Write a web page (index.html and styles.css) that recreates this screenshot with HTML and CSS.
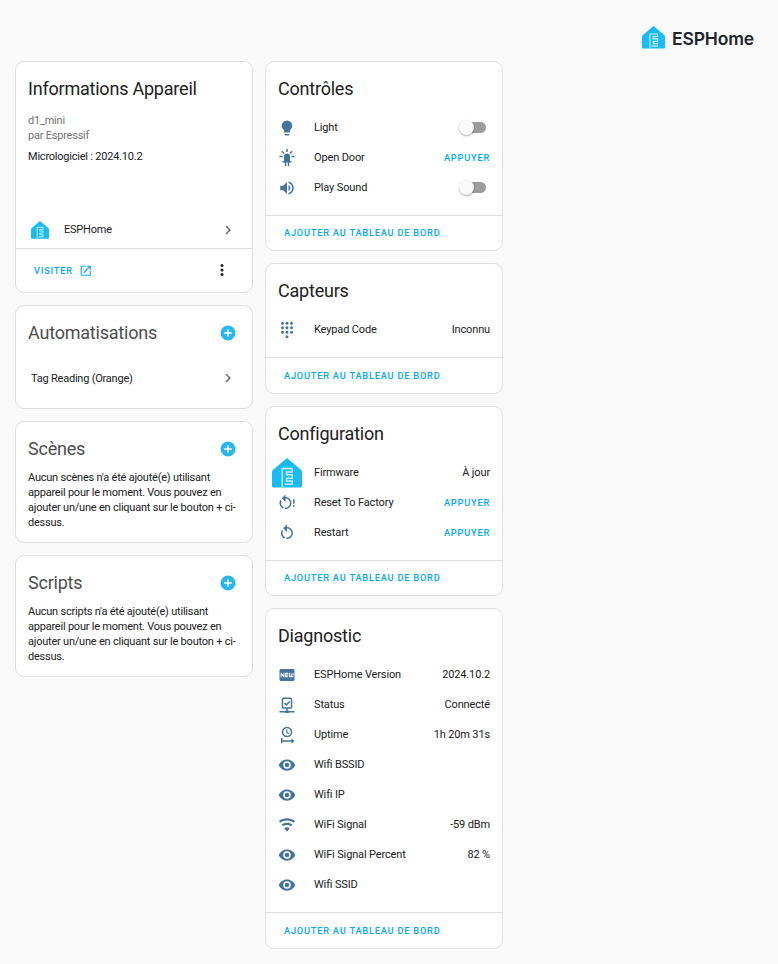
FILE: index.html
```html
<!DOCTYPE html>
<html lang="fr">
<head>
<meta charset="utf-8">
<title>Appareil</title>
<link rel="stylesheet" href="styles.css">
</head>
<body>
<svg class="defs" width="0" height="0">
  <symbol id="home" viewBox="0 0 30 30">
    <path fill="#18bcf2" d="M15 0 29.200 12.100Q30 12.800 30 13.900V27.900Q30 29.400 28.500 29.400H1.500Q0 29.400 0 27.900V13.900Q0 12.800.8 12.100Z"/>
    <path fill="none" stroke="#c8effc" stroke-width="1.500" d="M10.300 29V10.400H20.200V13.900H14.600V16.700H20.200V20.200H14.600V23H20.200V26.300H12.800"/>
  </symbol>
  <symbol id="bulb" viewBox="0 0 24 24"><path d="M12,2A7,7 0 0,0 5,9C5,11.38 6.19,13.47 8,14.74V17A1,1 0 0,0 9,18H15A1,1 0 0,0 16,17V14.74C17.81,13.47 19,11.38 19,9A7,7 0 0,0 12,2M9,21A1,1 0 0,0 10,22H14A1,1 0 0,0 15,21V20H9V21Z"/></symbol>
  <symbol id="led" viewBox="0 0 24 24"><path d="M11,0V4H13V0H11M18.3,2.29L15.24,5.29L16.64,6.71L19.7,3.71L18.3,2.29M5.71,2.29L4.29,3.71L7.29,6.71L8.71,5.29L5.71,2.29M12,6A4,4 0 0,0 8,10V16H6V18H9V23H11V18H13V23H15V18H18V16H16V10A4,4 0 0,0 12,6M2,9V11H6V9H2M18,9V11H22V9H18Z"/></symbol>
  <symbol id="volume" viewBox="0 0 24 24"><path d="M14,3.23V5.29C16.89,6.15 19,8.83 19,12C19,15.17 16.89,17.84 14,18.7V20.77C18,19.86 21,16.28 21,12C21,7.72 18,4.14 14,3.23M16.5,12C16.5,10.23 15.5,8.71 14,7.97V16C15.5,15.29 16.5,13.76 16.5,12M3,9V15H7L12,20V4L7,9H3Z"/></symbol>
  <symbol id="dialpad" viewBox="0 0 24 24"><path fill="none" stroke="currentColor" stroke-width="4" stroke-linecap="round" d="M6 3h0M12 3h0M18 3h0M6 9h0M12 9h0M18 9h0M6 15h0M12 15h0M18 15h0M12 21h0"/></symbol>
  <symbol id="restart" viewBox="0 0 24 24"><path d="M12,4C14.1,4 16.1,4.8 17.6,6.3C20.7,9.4 20.7,14.5 17.6,17.6C15.8,19.5 13.3,20.2 10.9,19.9L11.4,17.9C13.1,18.1 14.9,17.5 16.2,16.2C18.5,13.9 18.5,10.1 16.2,7.7C15.1,6.6 13.5,6 12,6V10.6L7,5.6L12,0.6V4M6.3,17.6C3.7,15 3.3,11 5.1,7.9L6.6,9.4C5.5,11.6 5.9,14.4 7.8,16.2C8.3,16.7 8.9,17.1 9.6,17.4L9,19.4C8,19 7.1,18.4 6.3,17.6Z"/></symbol>
  <symbol id="restart-alert" viewBox="0 0 24 24"><path transform="translate(-2)" d="M12,4C14.1,4 16.1,4.8 17.6,6.3C20.7,9.4 20.7,14.5 17.6,17.6C15.8,19.5 13.3,20.2 10.9,19.9L11.4,17.9C13.1,18.1 14.9,17.5 16.2,16.2C18.5,13.9 18.5,10.1 16.2,7.7C15.1,6.6 13.5,6 12,6V10.6L7,5.6L12,0.6V4M6.3,17.6C3.7,15 3.3,11 5.1,7.9L6.6,9.4C5.5,11.6 5.9,14.4 7.8,16.2C8.3,16.7 8.9,17.1 9.6,17.4L9,19.4C8,19 7.1,18.4 6.3,17.6Z"/><path d="M20 7h2v6h-2zM20 15h2v2h-2z"/></symbol>
  <symbol id="new" viewBox="0 0 24 24"><path d="M20,4C21.11,4 22,4.89 22,6V18C22,19.11 21.11,20 20,20H4C2.89,20 2,19.11 2,18V6C2,4.89 2.89,4 4,4H20M8.5,15V9H7.25V12.5L4.75,9H3.5V15H4.75V11.5L7.3,15H8.5M13.5,10.26V9H9.5V15H13.5V13.75H11V12.64H13.5V11.38H11V10.26H13.5M20.5,14V9H19.25V13.5H18.13V10H16.88V13.5H15.75V9H14.5V14A1,1 0 0,0 15.5,15H19.5A1,1 0 0,0 20.5,14Z"/></symbol>
  <symbol id="network" viewBox="0 0 24 24"><g fill="none" stroke="currentColor" stroke-width="2"><rect x="6" y="3" width="12" height="13" rx="1"/><path d="M8.700 9.300 11.200 11.800 15.700 7.300M12 16v4M2 21h20"/></g><path d="M9 19.500h6v3H9z"/></symbol>
  <symbol id="uptime" viewBox="0 0 24 24"><g fill="none" stroke="currentColor" stroke-width="2"><circle cx="12" cy="8" r="6"/><path stroke-width="1.500" d="M11.750 4.500V8.500L14.700 10.200"/><path d="M5 16v7M5 20h14"/></g><path d="M18 16.500 22 20 18 23.500z"/></symbol>
  <symbol id="eye" viewBox="0 0 24 24"><path d="M12,9A3,3 0 0,0 9,12A3,3 0 0,0 12,15A3,3 0 0,0 15,12A3,3 0 0,0 12,9M12,17A5,5 0 0,1 7,12A5,5 0 0,1 12,7A5,5 0 0,1 17,12A5,5 0 0,1 12,17M12,4.5C7,4.5 2.73,7.61 1,12C2.73,16.39 7,19.5 12,19.5C17,19.5 21.27,16.39 23,12C21.27,7.61 17,4.5 12,4.5Z"/></symbol>
  <symbol id="wifi" viewBox="0 0 24 24"><path d="M12,21L15.6,16.2C14.6,15.45 13.35,15 12,15C10.65,15 9.4,15.45 8.4,16.2L12,21M12,3C7.95,3 4.21,4.34 1.2,6.6L3,9C5.5,7.12 8.62,6 12,6C15.38,6 18.5,7.12 21,9L22.8,6.6C19.79,4.34 16.05,3 12,3M12,9C9.3,9 6.81,9.89 4.8,11.4L6.6,13.8C8.1,12.67 9.97,12 12,12C14.03,12 15.9,12.67 17.4,13.8L19.2,11.4C17.19,9.89 14.7,9 12,9Z"/></symbol>
  <symbol id="open" viewBox="0 0 24 24"><path d="M14,3V5H17.59L7.76,14.83L9.17,16.24L19,6.41V10H21V3M19,19H5V5H12V3H5C3.89,3 3,3.9 3,5V19A2,2 0 0,0 5,21H19A2,2 0 0,0 21,19V12H19V19Z"/></symbol>
  <symbol id="plus" viewBox="0 0 24 24"><path d="M17,13H13V17H11V13H7V11H11V7H13V11H17M12,2A10,10 0 0,0 2,12A10,10 0 0,0 12,22A10,10 0 0,0 22,12A10,10 0 0,0 12,2Z"/></symbol>
  <symbol id="chevron" viewBox="0 0 24 24"><path d="M8.59,16.58L13.17,12L8.59,7.41L10,6L16,12L10,18L8.59,16.58Z"/></symbol>
  <symbol id="dots" viewBox="0 0 24 24"><circle cx="12" cy="6" r="2"/><circle cx="12" cy="12" r="2"/><circle cx="12" cy="18" r="2"/></symbol>
</svg>

<header class="brand">
  <svg class="brand-mark"><use href="#home"/></svg>
  <span class="brand-name">ESPHome</span>
</header>

<main class="columns">
  <div class="column">
    <section class="card info">
      <h1>Informations Appareil</h1>
      <div class="device">
        <div class="muted">d1_mini</div>
        <div class="muted">par Espressif</div>
        <div class="firmware">Micrologiciel : 2024.10.2</div>
      </div>
      <a class="integration">
        <svg class="icon"><use href="#home"/></svg>
        <span class="label">ESPHome</span>
        <svg class="icon chevron"><use href="#chevron"/></svg>
      </a>
      <footer class="visit">
        <a class="button">VISITER</a>
        <svg class="open"><use href="#open"/></svg>
        <svg class="icon dots"><use href="#dots"/></svg>
      </footer>
    </section>

    <section class="card related automations">
      <h1>Automatisations <svg class="icon add"><use href="#plus"/></svg></h1>
      <a class="link"><span class="label">Tag Reading (Orange)</span><svg class="icon chevron"><use href="#chevron"/></svg></a>
    </section>

    <section class="card related">
      <h1>Scènes <svg class="icon add"><use href="#plus"/></svg></h1>
      <p>Aucun scènes n'a été ajouté(e) utilisant appareil pour le moment. Vous pouvez en ajouter un/une en cliquant sur le bouton + ci-dessus.</p>
    </section>

    <section class="card related">
      <h1>Scripts <svg class="icon add"><use href="#plus"/></svg></h1>
      <p>Aucun scripts n'a été ajouté(e) utilisant appareil pour le moment. Vous pouvez en ajouter un/une en cliquant sur le bouton + ci-dessus.</p>
    </section>
  </div>

  <div class="column">
    <section class="card entities">
      <h1>Contrôles</h1>
      <div class="row"><svg class="icon"><use href="#bulb"/></svg><span class="label">Light</span><span class="switch"></span></div>
      <div class="row"><svg class="icon"><use href="#led"/></svg><span class="label">Open Door</span><a class="button">APPUYER</a></div>
      <div class="row"><svg class="icon"><use href="#volume"/></svg><span class="label">Play Sound</span><span class="switch"></span></div>
      <footer><a class="button">AJOUTER AU TABLEAU DE BORD</a></footer>
    </section>

    <section class="card entities">
      <h1>Capteurs</h1>
      <div class="row"><svg class="icon"><use href="#dialpad"/></svg><span class="label">Keypad Code</span><span>Inconnu</span></div>
      <footer class="tall"><a class="button">AJOUTER AU TABLEAU DE BORD</a></footer>
    </section>

    <section class="card entities">
      <h1>Configuration</h1>
      <div class="row"><svg class="icon picture"><use href="#home"/></svg><span class="label">Firmware</span><span>À jour</span></div>
      <div class="row"><svg class="icon"><use href="#restart-alert"/></svg><span class="label">Reset To Factory</span><a class="button">APPUYER</a></div>
      <div class="row"><svg class="icon"><use href="#restart"/></svg><span class="label">Restart</span><a class="button">APPUYER</a></div>
      <footer><a class="button">AJOUTER AU TABLEAU DE BORD</a></footer>
    </section>

    <section class="card entities">
      <h1>Diagnostic</h1>
      <div class="row"><svg class="icon"><use href="#new"/></svg><span class="label">ESPHome Version</span><span>2024.10.2</span></div>
      <div class="row"><svg class="icon"><use href="#network"/></svg><span class="label">Status</span><span>Connecté</span></div>
      <div class="row"><svg class="icon"><use href="#uptime"/></svg><span class="label">Uptime</span><span>1h 20m 31s</span></div>
      <div class="row"><svg class="icon"><use href="#eye"/></svg><span class="label">Wifi BSSID</span></div>
      <div class="row"><svg class="icon"><use href="#eye"/></svg><span class="label">Wifi IP</span></div>
      <div class="row"><svg class="icon"><use href="#wifi"/></svg><span class="label">WiFi Signal</span><span>-59 dBm</span></div>
      <div class="row"><svg class="icon"><use href="#eye"/></svg><span class="label">WiFi Signal Percent</span><span>82 %</span></div>
      <div class="row"><svg class="icon"><use href="#eye"/></svg><span class="label">Wifi SSID</span></div>
      <footer class="tall"><a class="button">AJOUTER AU TABLEAU DE BORD</a></footer>
    </section>
  </div>
</main>
</body>
</html>
```
FILE: styles.css
```css
* { box-sizing: border-box; }

body {
  margin: 0;
  background: #fafafa;
  color: #212121;
  font: 11px/15px Roboto, sans-serif;
  letter-spacing: -0.22px;
}

.defs { display: block; }

svg { fill: currentColor; flex: none; }

.brand {
  display: flex;
  align-items: center;
  justify-content: flex-end;
  gap: 7px;
  height: 61px;
  padding: 14px 24px 0 0;
  color: #212529;
}
.brand-mark { width: 23px; height: 23px; }
.brand-name { padding-top: 2px; font: 600 17.5px/24px Inter, sans-serif; letter-spacing: -0.15px; }

.columns { display: flex; gap: 12px; padding-left: 15px; }
.column { display: flex; flex-direction: column; gap: 12px; width: 238px; }

.card {
  background: #fff;
  border: 1px solid #e0e0e0;
  border-radius: 9px;
}

h1 {
  display: flex;
  justify-content: space-between;
  align-items: center;
  height: 50px;
  margin: 0;
  padding: 4px 12px 0;
  font-size: 18px;
  font-weight: 400;
  line-height: 24px;
  letter-spacing: -0.012em;
}

.icon { display: block; width: 18px; height: 18px; }
.label { flex: 1; }
.chevron { color: #6f6f6f; }

.button {
  color: #03a9f4;
  font-size: 9.2px;
  font-weight: 500;
  letter-spacing: 0.088em;
}

/* Device information */
.device { height: 97px; padding: 1px 12px 0; }
.muted { color: #727272; }
.firmware { margin-top: 6px; }
.integration {
  display: flex;
  align-items: center;
  gap: 15px;
  height: 39px;
  padding: 2px 15px 0;
}
.visit {
  display: flex;
  align-items: center;
  height: 44px;
  padding: 0 21px 0 18px;
  border-top: 1px solid #e0e0e0;
}
.open { width: 13.500px; height: 13.500px; margin-left: 6px; color: #03a9f4; }
.dots { margin: 0 0 2px auto; }

/* Automations, scenes and scripts */
.related h1 { color: #4d4d4d; }
.related .add { margin-right: 3px; color: #29b6f6; }
.related p { height: 70px; margin: -2px 0 2px; padding: 0 12px; }
.automations { height: 104px; }
.link {
  display: flex;
  align-items: center;
  height: 42px;
  padding: 2px 15px 0;
}

/* Entity lists */
.row {
  display: flex;
  align-items: center;
  height: 30px;
  padding: 0 12px;
  letter-spacing: -0.14px;
}
.row .icon { position: relative; top: 1px; margin-right: 18px; color: #44739e; }
.row .picture { width: 30px; height: 30px; margin: 0 12px 0 -6px; }

.entities footer {
  display: flex;
  align-items: center;
  height: 35px;
  margin-top: 13px;
  padding: 0 0 2px 18px;
  border-top: 1px solid #e0e0e0;
}
.entities .tall { height: 36px; padding-bottom: 0; }

.switch {
  position: relative;
  width: 24px;
  height: 11px;
  margin-right: 4px;
  border-radius: 6px;
  background: #9c9c9c;
}
.switch::before {
  content: "";
  position: absolute;
  left: -3px;
  top: -2px;
  width: 15px;
  height: 15px;
  border-radius: 50%;
  background: #fafafa;
  box-shadow: 0 1px 2px rgba(0, 0, 0, .35);
}
```
